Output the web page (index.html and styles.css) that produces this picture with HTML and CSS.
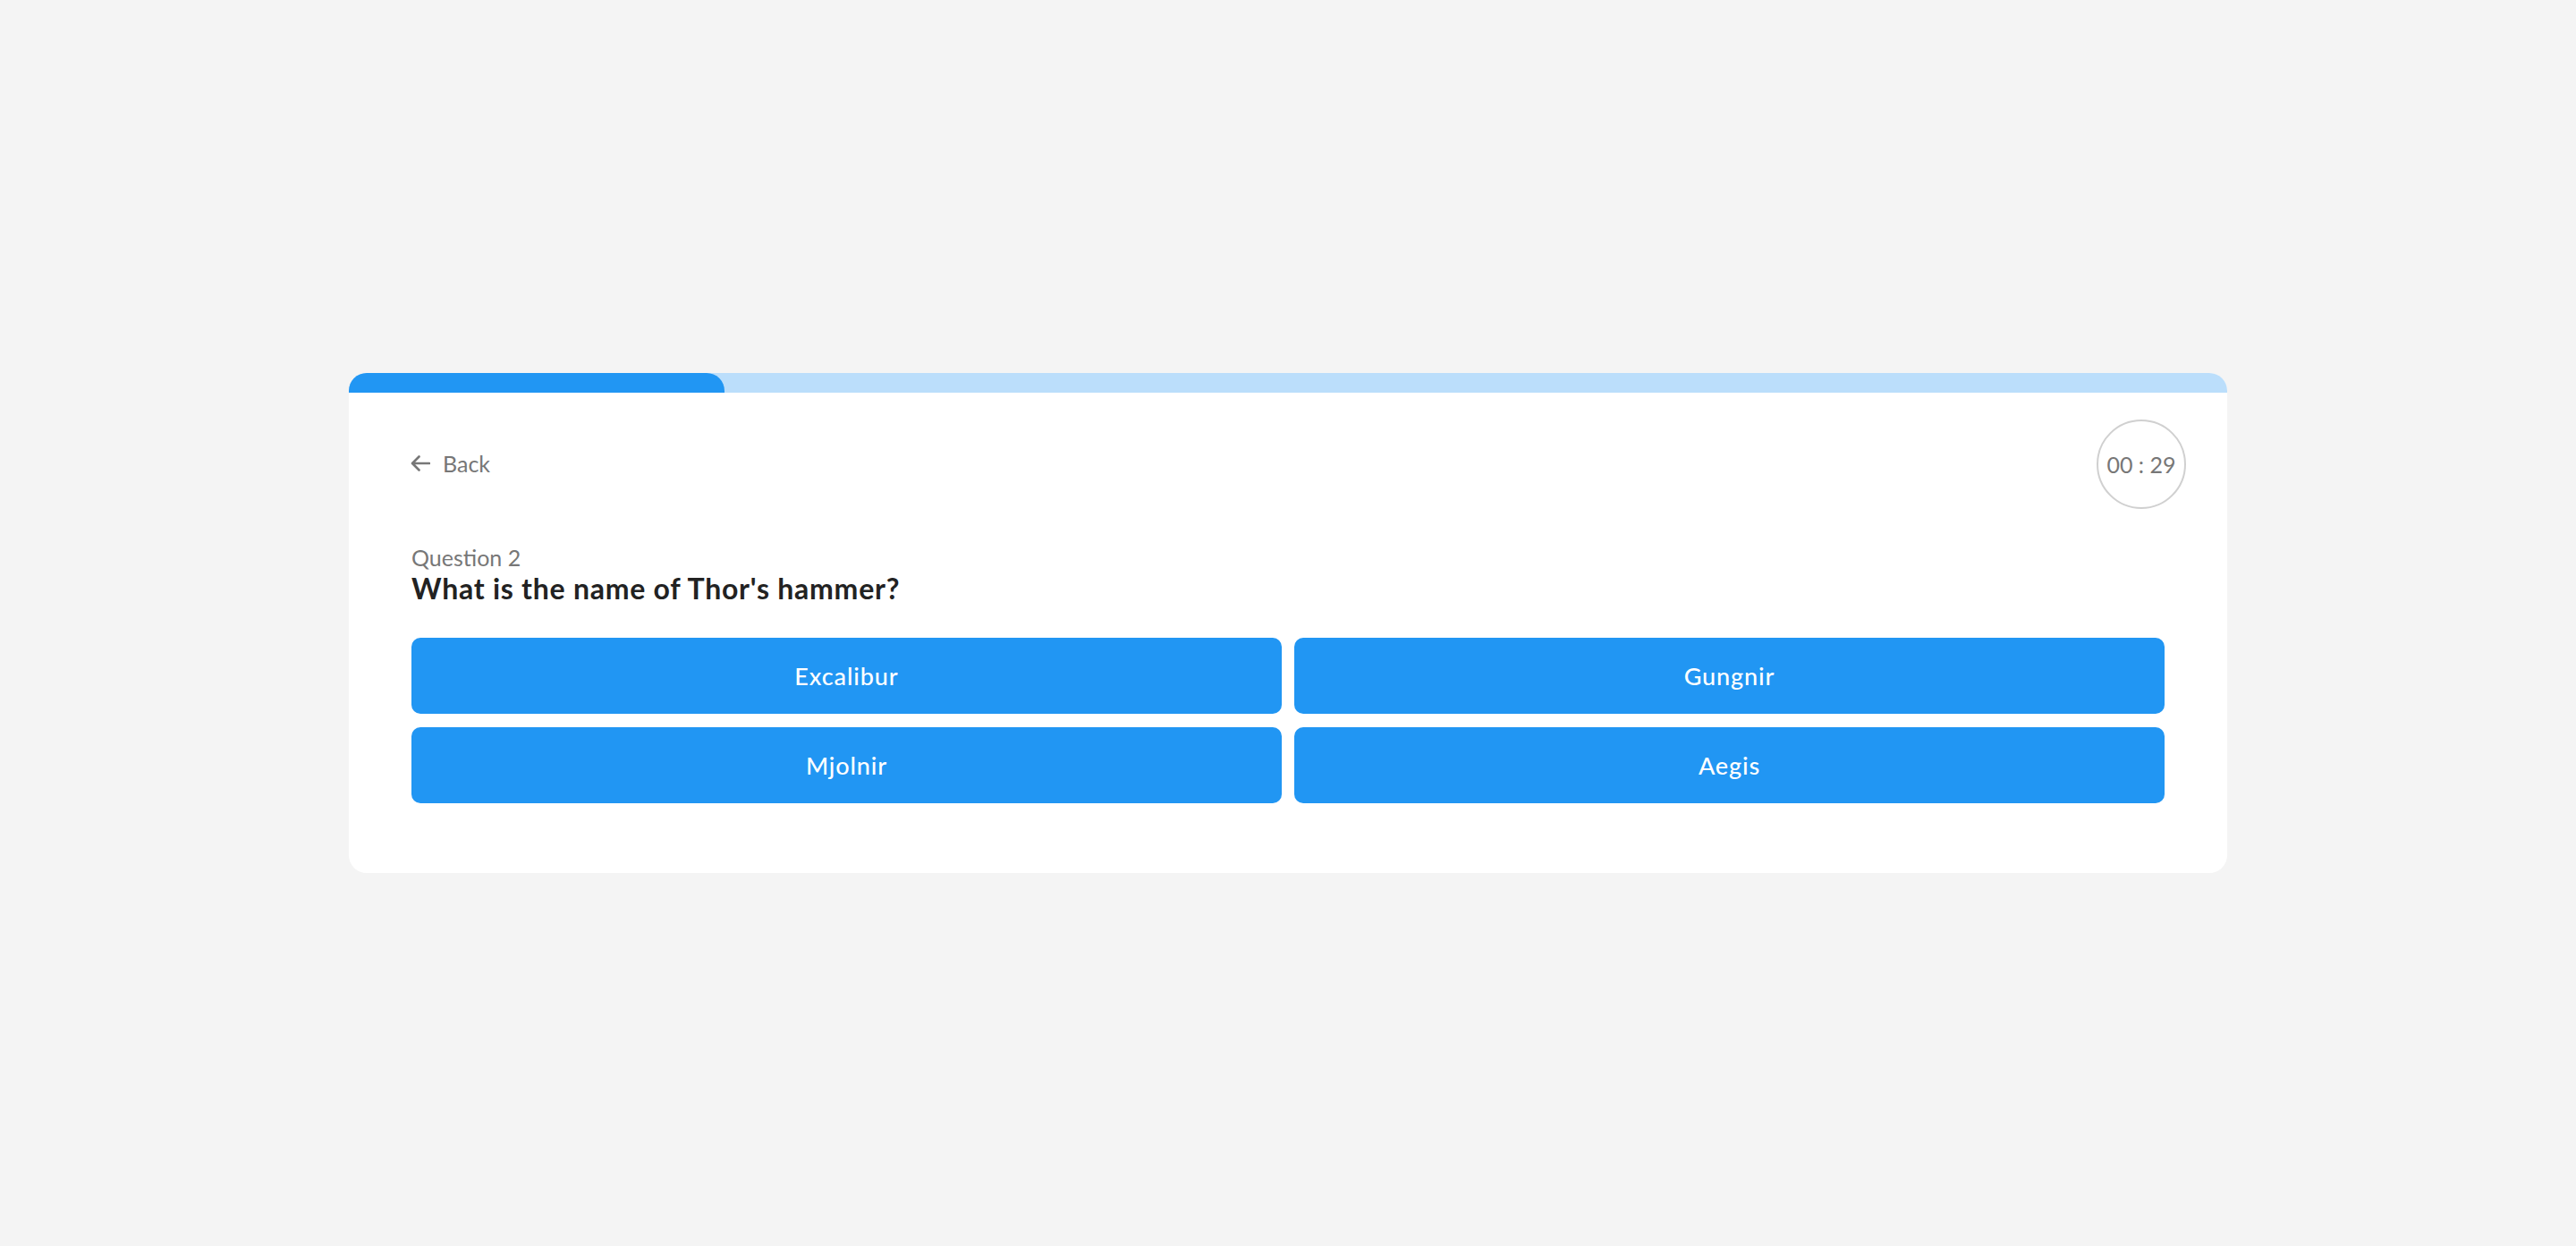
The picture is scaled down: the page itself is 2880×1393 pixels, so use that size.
FILE: index.html
```html
<!DOCTYPE html>
<html lang="en">
<head>
<meta charset="utf-8">
<title>Quiz</title>
<link rel="stylesheet" href="styles.css">
</head>
<body>
<main class="page">
  <section class="card">
    <div class="progress"><div class="progress-fill" style="width: 20%"></div></div>
    <div class="body">
      <header class="header">
        <a class="back" href="#">
          <svg class="back-icon" width="22" height="18" viewBox="0 0 22 18" aria-hidden="true">
            <path d="M21 9H2.5M9.5 1.5L2 9l7.5 7.5" fill="none" stroke="#777" stroke-width="2.6" stroke-linecap="round" stroke-linejoin="round"/>
          </svg>
          <span>Back</span>
        </a>
        <div class="timer">00 : 29</div>
      </header>
      <div class="question">
        <div class="q-label">Question 2</div>
        <h1 class="q-title">What is the name of Thor's hammer?</h1>
      </div>
      <div class="answers">
        <button class="answer">Excalibur</button>
        <button class="answer">Gungnir</button>
        <button class="answer">Mjolnir</button>
        <button class="answer">Aegis</button>
      </div>
    </div>
  </section>
</main>
</body>
</html>
```
FILE: styles.css
```css
* { box-sizing: border-box; }
html, body {
  margin: 0;
  padding: 0;
  height: 100%;
}
body {
  background: #f4f4f4;
  font-family: Lato, "Noto Sans", sans-serif;
}
.page {
  min-height: 100vh;
  display: flex;
  align-items: center;
  justify-content: center;
}
.card {
  width: 2100px;
  background: #fff;
  border-radius: 20px;
  overflow: hidden;
}
.progress {
  height: 22px;
  background: #bbdefb;
}
.progress-fill {
  height: 100%;
  background: #2196f3;
  border-top-right-radius: 20px;
}
.body {
  padding: 30px 70px 78px 70px;
}
.header {
  display: flex;
  align-items: center;
  justify-content: space-between;
  margin-right: -24px;
}
.back {
  display: flex;
  align-items: center;
  gap: 14px;
  color: #777;
  text-decoration: none;
  font-size: 25px;
  margin-left: -1px;
  margin-top: -2px;
}
.back-icon { display: block; }
.timer {
  width: 100px;
  height: 100px;
  border: 2px solid #d0d0d0;
  border-radius: 50%;
  display: flex;
  align-items: center;
  justify-content: center;
  color: #777;
  font-size: 25px;
}
.question {
  margin-top: 39px;
}
.q-label {
  font-size: 25px;
  color: #777;
}
.q-title {
  margin: 0;
  font-size: 32px;
  font-weight: 700;
  letter-spacing: 0.75px;
  color: #222;
}
.answers {
  margin-top: 35.5px;
  display: grid;
  grid-template-columns: 1fr 1fr;
  gap: 15px 14px;
}
.answer {
  height: 85px;
  border: none;
  border-radius: 10px;
  background: #2196f3;
  color: #fff;
  font-family: Lato, "Noto Sans", sans-serif;
  font-size: 27px;
  font-weight: 500;
  letter-spacing: 0.9px;
  cursor: pointer;
}
```
